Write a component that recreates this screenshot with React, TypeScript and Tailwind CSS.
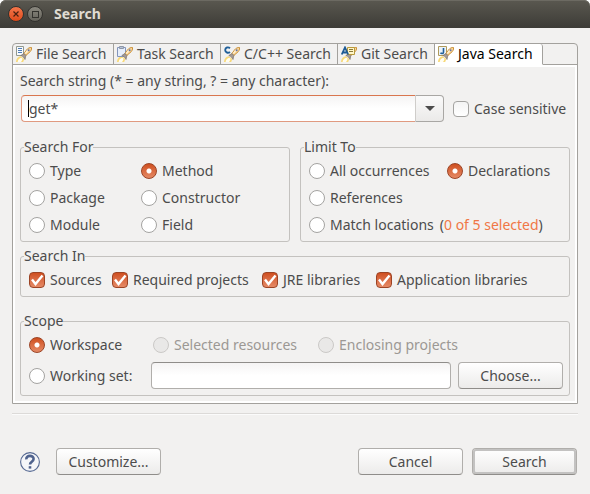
import type { ButtonHTMLAttributes, InputHTMLAttributes, ReactNode } from "react";

type Badge = "file" | "task" | "c" | "git" | "java";

function BadgeShape({ kind }: { kind: Badge }) {
  switch (kind) {
    case "file":
      return (
        <g>
          <path d="M.5.5h7v9h-7z" fill="#f7fafd" stroke="#93998f" />
          <path d="M2 2.500h4M2 4.500h4M2 6.500h4" stroke="#4f7cb8" />
        </g>
      );
    case "task":
      return (
        <g>
          <path d="M.5 1.500h8v9h-8z" fill="#e6eefb" stroke="#8295bb" />
          <path d="M2.500.5h4v2h-4z" fill="#b9c3d6" stroke="#8d97a8" />
        </g>
      );
    case "c":
      return <path d="M6 2.200C4.400.8 1.200 1.200 1.200 4s3 3.300 4.800 1.900" fill="none" stroke="#1f5f99" strokeWidth="1.900" />;
    case "git":
      return (
        <g>
          <path d="M6.500 1.500h7v7h-7z" fill="#fff6c9" stroke="#b99a3c" />
          <path d="M8 3.500h4M8 5.500h4" stroke="#8a7a3a" />
          <path d="M.8 8.500 4 1.500 7.200 8.500M2 6.500h4" fill="none" stroke="#1d5a94" strokeWidth="1.800" />
        </g>
      );
    case "java":
      return (
        <g>
          <path d="M.5.5h8v9h-8z" fill="#eaf3fb" stroke="#b09a5c" />
          <path d="M5.500 2v4.200c0 1.600-2.200 1.600-3 .6" fill="none" stroke="#1f5f99" strokeWidth="1.600" />
        </g>
      );
  }
}

function SearchIcon({ kind }: { kind: Badge }) {
  return (
    <svg width="16" height="16" viewBox="0 0 16 16" className="shrink-0" aria-hidden="true">
      <path d="M0 16c0-3.200 2-5.500 4.800-5.800l3.200 2.600c0 1.600-.4 2.600-1 3.200z" fill="#f8d978" />
      <path d="M1.600 16c.4-2.400 1.800-3.800 3.900-4.200l1 1c-.2 1.400-.8 2.400-1.500 3.200z" fill="#fffdf2" />
      {kind !== "git" && <BadgeShape kind={kind} />}
      <path d="M8 7.500 10.500 4c1.300-1.800 3.200-2.700 5-2.500.3 2-.6 3.900-2.500 5.200L9.800 9.500z" fill="#fbd9a0" stroke="#c98f35" />
      <path d="M4.800 9.500 8 7.500 9.800 9.500 9 13.500c-.6-1.800-2.200-3.400-4.200-4z" fill="#a39a95" stroke="#7b716c" strokeWidth=".7" />
      <path d="M9.300 7.300 12 4" stroke="#fff3d8" strokeWidth="1.200" />
      <circle cx="12.600" cy="4.300" r="1" fill="#6672a0" />
      {kind === "git" && <BadgeShape kind={kind} />}
    </svg>
  );
}

const tabs: { kind: Badge; label: string }[] = [
  { kind: "file", label: "File Search" },
  { kind: "task", label: "Task Search" },
  { kind: "c", label: "C/C++ Search" },
  { kind: "git", label: "Git Search" },
  { kind: "java", label: "Java Search" },
];

function Tab({ kind, label, active }: { kind: Badge; label: string; active: boolean }) {
  return (
    <button
      type="button"
      role="tab"
      aria-selected={active}
      className={
        "flex h-[21px] items-center gap-1 border-r border-b border-[#a3a19d] pl-[3px] whitespace-nowrap " +
        (active ? "rounded-tr-[3px] border-b-white bg-white text-black" : "")
      }
    >
      <SearchIcon kind={kind} />
      {label}
    </button>
  );
}

function Radio({ children, disabled, ...rest }: { children: ReactNode } & InputHTMLAttributes<HTMLInputElement>) {
  return (
    <label className={"flex items-center gap-[5px] whitespace-nowrap " + (disabled ? "text-[#9c9894]" : "")}>
      <input
        type="radio"
        disabled={disabled}
        className="size-4 shrink-0 appearance-none rounded-full border border-[#a4a3a1] bg-white checked:border-[#9c4425] checked:bg-[radial-gradient(circle,#fff_0_2px,transparent_3px),linear-gradient(#cf4f1f,#e58a66)] disabled:border-[#cbc9c7] disabled:bg-[#e9e8e7]"
        {...rest}
      />
      {children}
    </label>
  );
}

function Check({ children, ...rest }: { children: ReactNode } & InputHTMLAttributes<HTMLInputElement>) {
  return (
    <label className="flex items-center gap-[5px] whitespace-nowrap">
      <span className="grid size-4 shrink-0">
        <input
          type="checkbox"
          className="peer col-start-1 row-start-1 size-4 appearance-none rounded-[4px] border border-[#a4a3a1] bg-linear-to-b from-[#f4f4f4] to-white checked:border-[#9c4425] checked:from-[#cf4f1f] checked:to-[#e58a66]"
          {...rest}
        />
        <svg
          viewBox="0 0 16 16"
          className="pointer-events-none z-10 col-start-1 row-start-1 hidden size-4 peer-checked:block"
          aria-hidden="true"
        >
          <path d="M3 7.500 6.500 12 13.500 3.500" fill="none" stroke="#fff" strokeWidth="2.400" />
        </svg>
      </span>
      {children}
    </label>
  );
}

function Group({ title, className, children }: { title: string; className?: string; children: ReactNode }) {
  return (
    <fieldset className={"min-w-0 rounded-[3px] border border-[#c4c2bf] px-2 pb-[6px] " + (className ?? "")}>
      <legend className="-ml-[5px]">{title}</legend>
      <div className="pt-1">{children}</div>
    </fieldset>
  );
}

function PushButton({ primary, children, ...rest }: { primary?: boolean } & ButtonHTMLAttributes<HTMLButtonElement>) {
  return (
    <button
      type="button"
      className={
        "h-[27px] w-[105px] shrink-0 rounded-[4px] border border-[#b0aeab] border-b-[#8f8d8a] bg-linear-to-b from-white to-[#ecebea] " +
        (primary ? "border-[#9d9b99] shadow-[inset_0_0_0_2px_#c3c2c1]" : "")
      }
      {...rest}
    >
      {children}
    </button>
  );
}

export default function App() {
  return (
    <div className="min-h-screen bg-white font-['Noto_Sans','Open_Sans',sans-serif] text-[14px] leading-5 text-[#4c4c4c]">
      <div className="min-h-screen rounded-t-[6px] bg-[#f2f1f0]">
        <header className="flex h-7 items-center rounded-t-[6px] bg-linear-to-b from-[#5a5850] to-[#3d3c37] pl-2 text-[#dfdbd2] shadow-[inset_0_1px_#6c6a62]">
          <button
            type="button"
            aria-label="Close"
            className="flex size-4 items-center justify-center rounded-full border border-[#33322e] bg-linear-to-b from-[#f4764a] to-[#df4a18]"
          >
            <svg viewBox="0 0 6 6" className="size-[6px]" aria-hidden="true">
              <path d="M.5.5l5 5M5.500.5l-5 5" stroke="#4a2010" strokeWidth="1.200" />
            </svg>
          </button>
          <button
            type="button"
            aria-label="Maximize"
            className="ml-[3px] flex size-4 items-center justify-center rounded-full border border-[#33322e] bg-linear-to-b from-[#8a887f] to-[#65635b]"
          >
            <span className="size-[7px] border border-[#33322e]" />
          </button>
          <h1 className="ml-[11px] font-bold">Search</h1>
        </header>

        <main className="px-3 pt-[15px]">
          <section className="rounded-t-[4px] border border-[#a3a19d]">
            <div role="tablist" className="grid grid-cols-[101px_107px_117px_97px_108px_1fr]">
              {tabs.map((tab) => (
                <Tab key={tab.kind} {...tab} active={tab.kind === "java"} />
              ))}
              <div className="border-b border-[#a3a19d]" />
            </div>

            <form className="border-2 border-white px-[5px] pt-1 pb-[5px]">
              <label htmlFor="pattern" className="block">
                Search string (* = any string, ? = any character):
              </label>
              <div className="mt-1 ml-px grid grid-cols-[1fr_117px] items-center gap-[9px]">
                <div className="relative flex h-[27px]">
                  <input
                    id="pattern"
                    type="text"
                    defaultValue="get*"
                    className="min-w-0 flex-1 rounded-l-[4px] border border-r-0 border-[#e09a80] border-t-[#d9764f] bg-linear-to-b from-[#f5f4f4] to-white to-50% pl-[7px] outline-none"
                  />
                  <span className="absolute top-[5px] left-[7px] h-[17px] w-px bg-black" />
                  <button
                    type="button"
                    aria-label="Show previous searches"
                    className="flex w-[29px] items-center justify-center rounded-r-[4px] border border-[#a9a7a4] border-l-[#cfcdca] bg-linear-to-b from-[#fafafa] to-[#ebeae9]"
                  >
                    <svg viewBox="0 0 10 5" className="h-[5px] w-[10px]" aria-hidden="true">
                      <path d="M0 0h10L5 5z" fill="#4c4c4c" />
                    </svg>
                  </button>
                </div>
                <Check>Case sensitive</Check>
              </div>

              <div className="mt-[15px] grid grid-cols-2 gap-[10px]">
                <Group title="Search For">
                  <div className="grid grid-cols-[112px_1fr] gap-y-[7px]">
                    <Radio name="for">Type</Radio>
                    <Radio name="for" defaultChecked>Method</Radio>
                    <Radio name="for">Package</Radio>
                    <Radio name="for">Constructor</Radio>
                    <Radio name="for">Module</Radio>
                    <Radio name="for">Field</Radio>
                  </div>
                </Group>
                <Group title="Limit To">
                  <div className="grid grid-cols-[138px_1fr] gap-y-[7px]">
                    <Radio name="limit">All occurrences</Radio>
                    <Radio name="limit" defaultChecked>Declarations</Radio>
                    <Radio name="limit">References</Radio>
                    <div className="col-start-1 col-end-3 flex gap-[6px]">
                      <Radio name="limit">Match locations</Radio>
                      <span className="whitespace-nowrap">
                        (<a href="#locations" className="text-[#f07746]">0 of 5 selected</a>)
                      </span>
                    </div>
                  </div>
                </Group>
              </div>

              <Group title="Search In" className="mt-1">
                <div className="grid grid-cols-[83px_150px_114px_1fr]">
                  <Check defaultChecked>Sources</Check>
                  <Check defaultChecked>Required projects</Check>
                  <Check defaultChecked>JRE libraries</Check>
                  <Check defaultChecked>Application libraries</Check>
                </div>
              </Group>

              <Group title="Scope" className="mt-[14px]">
                <div className="grid grid-cols-[124px_165px_1fr]">
                  <Radio name="scope" defaultChecked>Workspace</Radio>
                  <Radio name="scope" disabled>Selected resources</Radio>
                  <Radio name="scope" disabled>Enclosing projects</Radio>
                </div>
                <div className="mt-[7px] -mr-[2px] grid grid-cols-[122px_1fr_105px] items-center">
                  <Radio name="scope">Working set:</Radio>
                  <input
                    type="text"
                    aria-label="Working set"
                    className="mr-[7px] h-[27px] min-w-0 rounded-[4px] border border-[#b0aeab] border-t-[#8f8d8a] bg-linear-to-b from-[#f5f4f4] to-white to-50% px-[7px] outline-none"
                  />
                  <PushButton>Choose...</PushButton>
                </div>
              </Group>
            </form>
          </section>

          <hr className="mt-[9px] h-[2px] border-t border-b border-t-[#dcdad8] border-b-[#fbfbfb]" />

          <footer className="mt-[33px] flex items-center pr-px pb-[19px] pl-2">
            <button type="button" aria-label="Help" className="size-5">
              <svg viewBox="0 0 20 20" className="size-5" aria-hidden="true">
                <circle cx="10" cy="10" r="9.400" fill="#f5f6f9" stroke="#566992" strokeWidth="1.100" />
                <path d="M6.300 7.400C6 2.800 13.700 2.800 13.600 7c-.1 2.800-3.600 2.700-3.600 5.600" fill="none" stroke="#4f628d" strokeWidth="2.600" />
                <path d="M8.700 14.200h2.600v2.400H8.700z" fill="#4f628d" />
              </svg>
            </button>
            <div className="ml-4 flex-1">
              <PushButton>Customize...</PushButton>
            </div>
            <div className="flex gap-[9px]">
              <PushButton>Cancel</PushButton>
              <PushButton primary>Search</PushButton>
            </div>
          </footer>
        </main>
      </div>
    </div>
  );
}
